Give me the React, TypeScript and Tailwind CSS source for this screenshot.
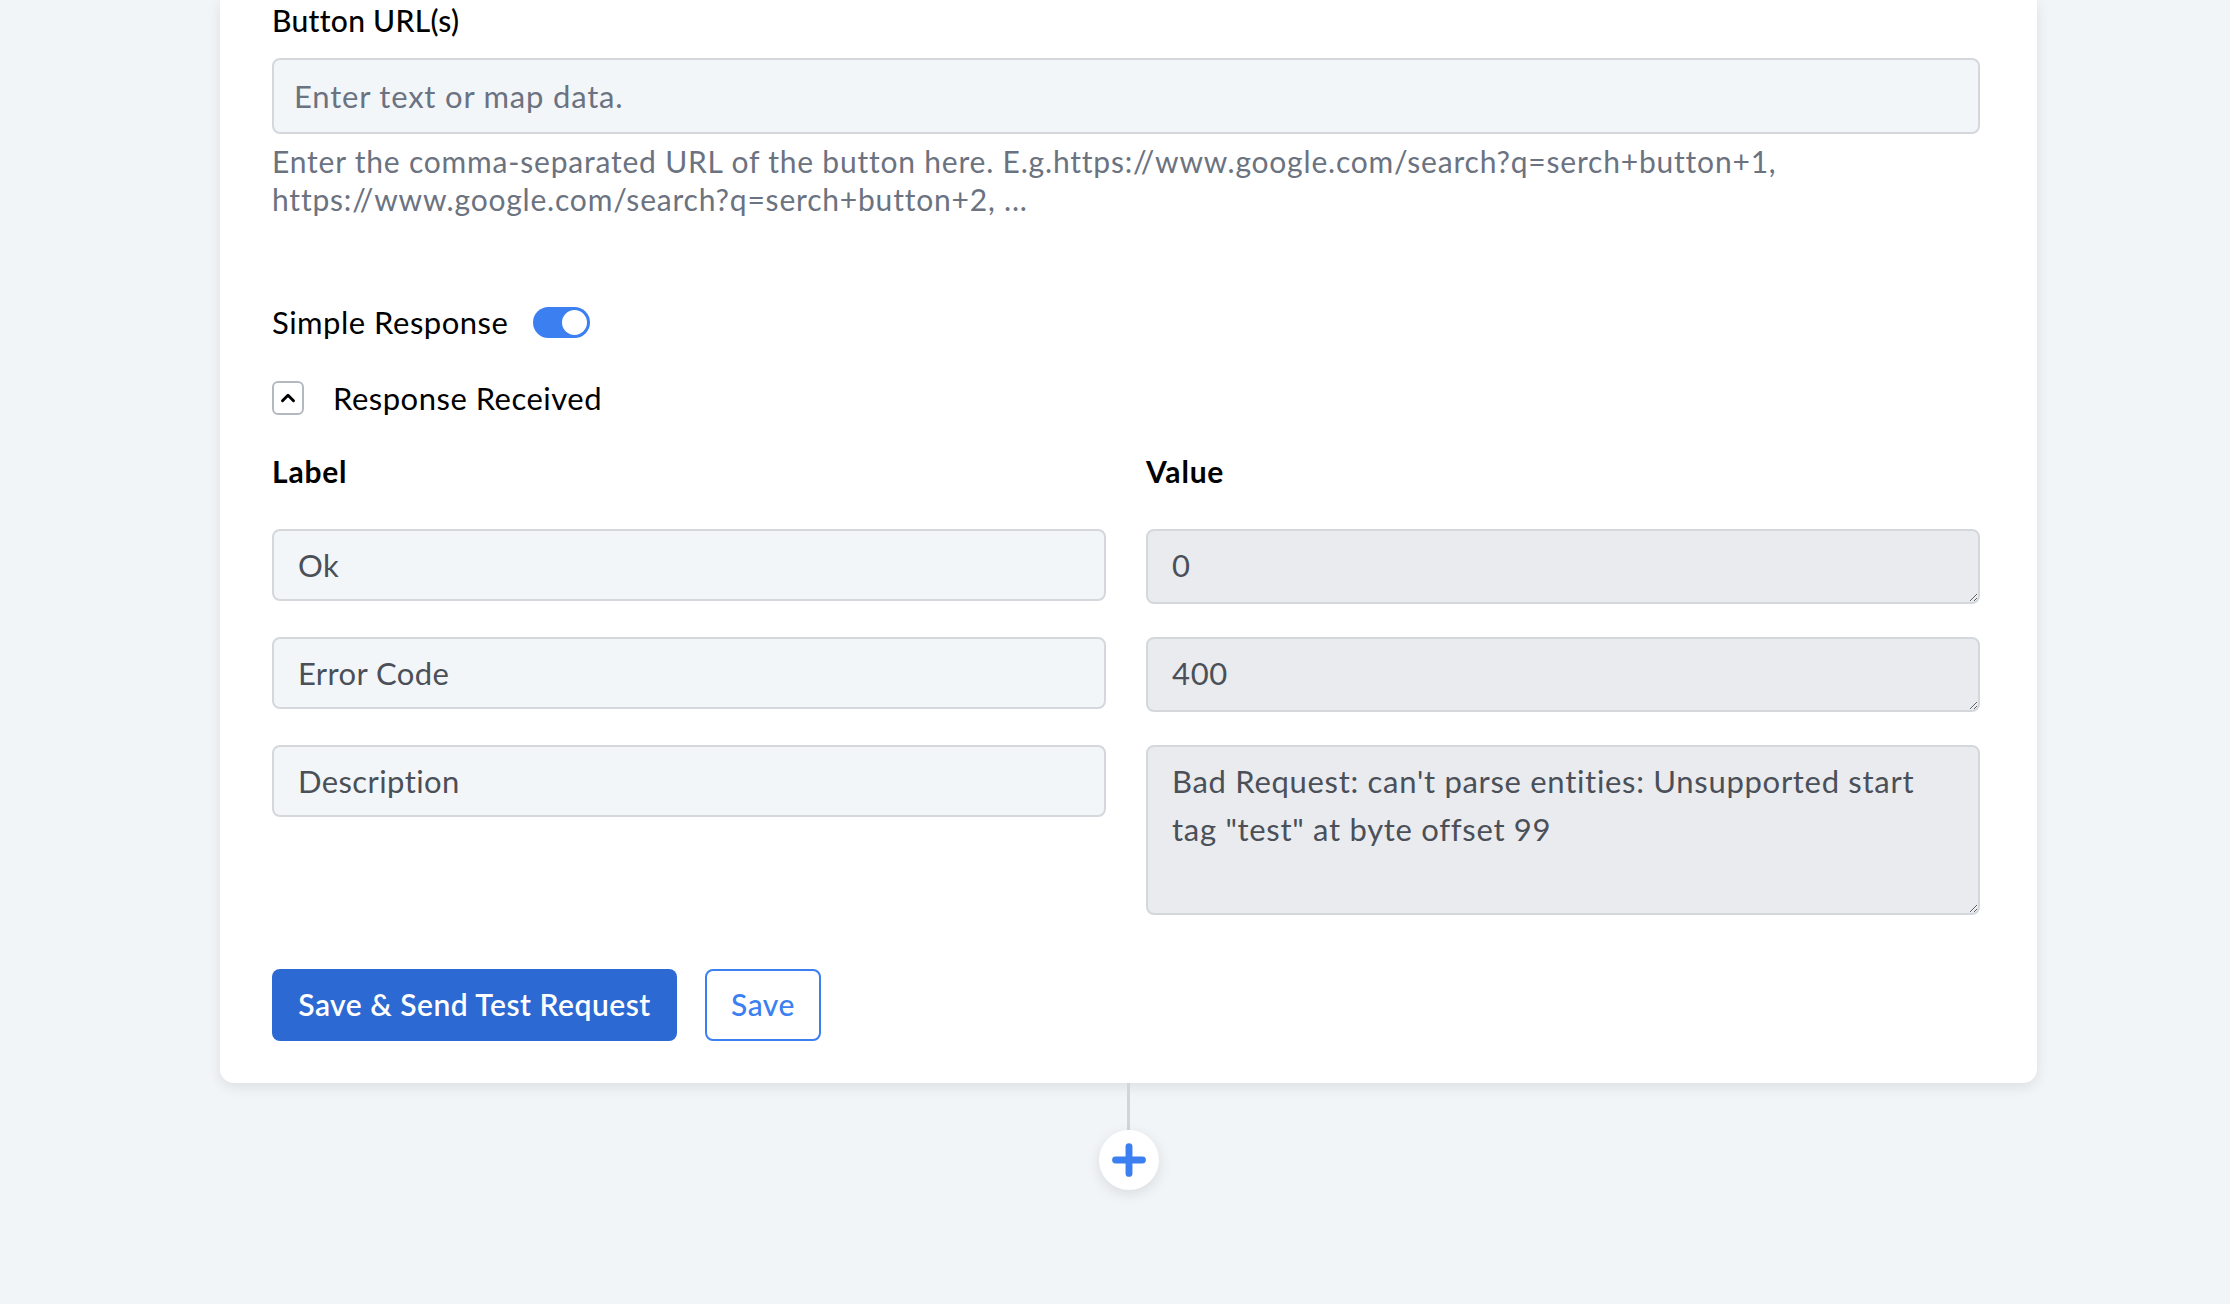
import React, { useState } from 'react';
import { ChevronUp, Plus } from 'lucide-react';

interface ResponseRow {
  label: string;
  value: string;
  tall?: boolean;
}

const rows: ResponseRow[] = [
  { label: 'Ok', value: '0' },
  { label: 'Error Code', value: '400' },
  { label: 'Description', value: 'Bad Request: can\'t parse entities: Unsupported start tag "test" at byte offset 99', tall: true },
];

const App: React.FC = () => {
  const [simple, setSimple] = useState(true);
  const [open, setOpen] = useState(true);

  return (
    <div className="min-h-screen h-[1304px] overflow-hidden bg-[#f2f5f8] font-['Lato',sans-serif]">
      <div className="ml-[220px] w-[1817px] bg-white rounded-b-[14px] shadow-[0_4px_14px_rgba(0,0,0,0.09)] pl-[52px] pr-[57px] pb-[42px]">
        <label className="block text-[30px] leading-[40px] font-medium tracking-[0.3px] text-black">Button URL(s)</label>
        <input
          placeholder="Enter text or map data."
          className="mt-[18px] w-full h-[76px] rounded-[8px] border-2 border-[#d4d8dd] bg-[#f3f6f9] px-[20px] text-[31px] tracking-[0.8px] text-gray-600 placeholder:text-[#6b7280] outline-none"
        />
        <p className="mt-[8px] text-[30px] leading-[38px] tracking-[0.8px] text-[#6b7280]">
          Enter the comma-separated URL of the button here. E.g.https://www.google.com/search?q=serch+button+1,
          <br />
          https://www.google.com/search?q=serch+button+2, ...
        </p>

        {/* simple response switch */}
        <div className="mt-[86px] flex items-center gap-[25px] h-[36px]">
          <span className="text-[31px] tracking-[0.5px] text-black">Simple Response</span>
          <button
            onClick={() => setSimple(!simple)}
            className={`w-[57px] h-[31px] rounded-full flex items-center px-[3px] ${simple ? 'bg-[#3b7ff0] justify-end' : 'bg-gray-300 justify-start'}`}
          >
            <span className="w-[25px] h-[25px] rounded-full bg-white" />
          </button>
        </div>

        <div className="mt-[35px] flex items-center gap-[29px]">
          <button
            onClick={() => setOpen(!open)}
            className="w-[32px] h-[34px] rounded-[6px] border-2 border-[#b4b9c1] flex items-center justify-center"
          >
            <ChevronUp size={22} strokeWidth={3.2} className="text-black" />
          </button>
          <span className="text-[31px] tracking-[0.5px] text-black">Response Received</span>
        </div>

        {open && (
          <>
            <div className="mt-[29px] grid grid-cols-2 gap-x-[40px]">
              <div className="text-[30px] leading-[40px] font-bold tracking-[0.8px] text-black">Label</div>
              <div className="text-[30px] leading-[40px] font-bold tracking-[0.8px] text-black">Value</div>
            </div>
            <div className="mt-[38px] grid grid-cols-2 gap-x-[40px] gap-y-[33px] items-start">
              {rows.map((r) => (
                <React.Fragment key={r.label}>
                  <input
                    defaultValue={r.label}
                    className="w-full h-[72px] rounded-[8px] border-2 border-[#d4d8dd] bg-[#f3f6f9] px-[24px] text-[31px] tracking-[0.4px] text-[#4b5058] outline-none"
                  />
                  <textarea
                    readOnly
                    defaultValue={r.value}
                    className={`w-full ${r.tall ? 'h-[170px]' : 'h-[75px]'} rounded-[8px] border-2 border-[#d4d8dd] bg-[#e9ebef] px-[24px] py-[10px] text-[31px] leading-[48px] tracking-[0.7px] text-[#4b5058] outline-none`}
                  />
                </React.Fragment>
              ))}
            </div>
          </>
        )}

        <div className="mt-[54px] flex gap-[28px]">
          <button className="h-[72px] w-[405px] rounded-[8px] bg-[#2d69d3] text-white text-[30px] tracking-[0.5px] font-semibold">
            Save &amp; Send Test Request
          </button>
          <button className="h-[72px] w-[116px] rounded-[8px] border-2 border-[#3b7ff0] bg-white text-[#3b7ff0] text-[30px] tracking-[0.5px] font-medium">
            Save
          </button>
        </div>
      </div>

      {/* connector to next step */}
      <div className="ml-[220px] w-[1817px] flex flex-col items-center">
        <div className="w-[3px] h-[47px] bg-[#d1d5db]" />
        <button className="w-[60px] h-[60px] rounded-full bg-white shadow-[0_4px_14px_rgba(0,0,0,0.1)] flex items-center justify-center">
          <Plus size={46} strokeWidth={3.6} className="text-[#3b7ff0]" />
        </button>
      </div>
    </div>
  );
};

export default App;
